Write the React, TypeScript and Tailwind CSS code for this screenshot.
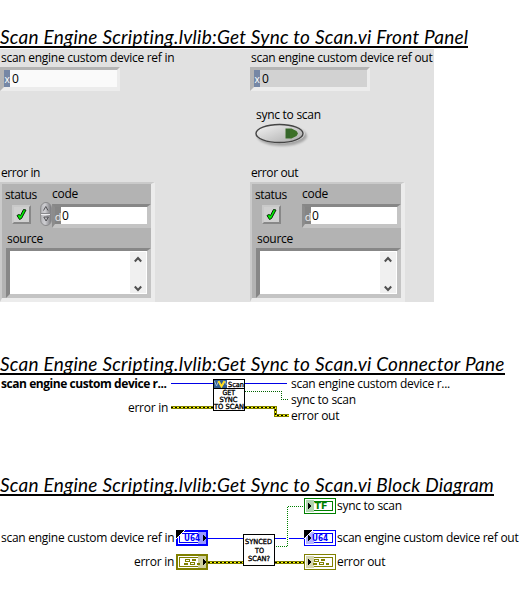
import type { ReactNode } from "react";

const labelFont = "font-['Open_Sans','Noto_Sans',sans-serif] text-[12px] leading-4 whitespace-pre text-black";

function Label({ children, className = "tracking-[-0.27px]" }: { children: ReactNode; className?: string }) {
  return <span className={`block ${labelFont} ${className}`}>{children}</span>;
}

function Heading({ children, className = "" }: { children: ReactNode; className?: string }) {
  return (
    <h2
      className={`h-[22px] w-fit overflow-hidden border-b-2 border-black font-['Lato',sans-serif] text-[19px] leading-[22px] font-normal tracking-[0.24px] whitespace-pre text-black italic [font-variant-ligatures:none] ${className}`}
    >
      {children}
    </h2>
  );
}

function RefField({ readOnly = false }: { readOnly?: boolean }) {
  return (
    <div className="h-6 w-[120px] border-t-[3px] border-r-[3px] border-b-4 border-l-4 border-t-[#b4b4b4] border-r-[#ececec] border-b-[#ececec] border-l-[#b4b4b4]">
      <div className={`flex h-full items-center ${readOnly ? "bg-[#d2d2d2]" : "bg-[#fafafa]"}`}>
        <span className="flex h-full w-[6px] items-center justify-center bg-[#7587a5] pt-[1px] font-['Open_Sans',sans-serif] text-[10px] leading-none text-white">x</span>
        <Label className="pl-[2px]">0</Label>
      </div>
    </div>
  );
}

function Spinner() {
  return (
    <svg className="block h-6 w-3" viewBox="0 0 12 24">
      <defs>
        <linearGradient id="spin">
          <stop offset="0" stopColor="#b4b4b8" />
          <stop offset=".4" stopColor="#cfcfd3" />
          <stop offset="1" stopColor="#77777b" />
        </linearGradient>
      </defs>
      <rect x=".7" y=".5" width="10.6" height="23" rx="5.3" fill="url(#spin)" stroke="#8a8a8c" />
      <path d="M1 11.500h10" stroke="#88888c" />
      <path d="M1 12.500h9" stroke="#ededf0" />
      <path d="M3.500 8.500 5.800 4.500 8 8.500M3.800 15h4.600L6.100 19z" fill="none" stroke="#505054" />
    </svg>
  );
}

function Check() {
  return (
    <div className="flex h-[19px] w-[19px] items-center justify-center border-2 border-t-[#c9c9c9] border-r-[#888] border-b-[#888] border-l-[#c9c9c9] bg-[#d0d0d0]">
      <svg className="h-[13px] w-[13px]" viewBox="0 0 13 13">
        <path d="M2 7.500 4 6.500 5.500 7.500 8.500 1.500 11 2 6.500 10.500 4.500 11.500Z" fill="#00f000" stroke="#002800" strokeWidth="1" />
      </svg>
    </div>
  );
}

function ErrorCluster({ editable = false }: { editable?: boolean }) {
  return (
    <div className="h-[120px] w-[155px] border-t-2 border-r-4 border-b-4 border-l-2 border-t-[#cacaca] border-r-[#ececec] border-b-[#ececec] border-l-[#cacaca] bg-[#b3b3b3]">
      <div className="flex h-16">
        <div className="w-[38px] pt-[3px]">
          <Label className="pl-[3px] tracking-[-0.35px]">status</Label>
          <div className="pt-[2px] pl-[10px]">
            <Check />
          </div>
        </div>
        <div className="w-3 pt-[18px]">{editable && <Spinner />}</div>
        <div className="w-[99px] pt-[2px]">
          <Label>code</Label>
          <div className="mt-[2px] h-6 border-t-[3px] border-r-4 border-b-4 border-l-[3px] border-t-[#878787] border-r-[#c4c4c4] border-b-[#c4c4c4] border-l-[#8c8c8c]">
            <div className="flex h-full items-center bg-white">
              <span className="flex h-full w-[6px] items-center justify-center bg-[#858585] pt-[1px] font-['Open_Sans',sans-serif] text-[11px] leading-none text-[#eee]">d</span>
              <Label className="pl-[1px]">0</Label>
            </div>
          </div>
        </div>
      </div>
      <div className="-mt-[17px] pl-[4px]">
        <Label className="pl-[1px] tracking-[-0.3px]">source</Label>
        <div className="mt-[1px] h-[50px] w-[145px] border-t-[3px] border-r-4 border-b-4 border-l-4 border-t-[#878787] border-r-[#c4c4c4] border-b-[#c4c4c4] border-l-[#878787]">
          <div className="flex h-full justify-end bg-white pt-[1px] pr-[1px] pb-[1px]">
            <div className="flex w-4 flex-col items-center justify-between bg-[#f0f0f0] pt-1 pb-px">
              <svg className="h-[7px] w-2" viewBox="0 0 8 7"><path d="m.8 5.500 3.200-3.500 3.200 3.500" fill="none" stroke="#505050" strokeWidth="2" /></svg>
              <svg className="h-[7px] w-2" viewBox="0 0 8 7"><path d="m.8 1.500 3.200 3.500 3.200-3.500" fill="none" stroke="#505050" strokeWidth="2" /></svg>
            </div>
          </div>
        </div>
      </div>
    </div>
  );
}

function SyncSwitch() {
  return (
    <svg className="block h-[28px] w-[56px]" viewBox="0 0 56 28">
      <defs>
        <linearGradient id="sw" x1="0" y1="0" x2="1" y2="1">
          <stop offset="0" stopColor="#f4f4f4" />
          <stop offset="1" stopColor="#a9a9a9" />
        </linearGradient>
        <filter id="soft"><feGaussianBlur stdDeviation="1" /></filter>
      </defs>
      <ellipse cx="29" cy="13" rx="25" ry="10" fill="#a5a5a5" filter="url(#soft)" />
      <ellipse cx="27" cy="10.500" rx="25" ry="10" fill="#d5d5d5" />
      <ellipse cx="26.500" cy="10.500" rx="23.500" ry="9" fill="url(#sw)" stroke="#454545" strokeWidth="1.400" />
      <path d="M32.500 5.500h6l5 2.500 1.500 2.500-1.500 2.500-5 2.500h-6z" fill="#3d7028" />
      <path d="M33 6h4v9h-4z" fill="#35662a" />
    </svg>
  );
}

function ErrorWire({ d }: { d: string }) {
  return (
    <g fill="none">
      <path d={d} stroke="#808000" strokeWidth="3" />
      <path d={d} stroke="#ffff00" strokeWidth="1" />
      <path d={d} stroke="#000" strokeWidth="1" strokeDasharray="2 2" />
    </g>
  );
}

type PixelTextProps = { x: number; y: number; w: number; size?: number; fill?: string; heavy?: boolean; children: string };

function PixelText({ x, y, w, size = 8, fill = "#000", heavy = false, children }: PixelTextProps) {
  return (
    <text
      x={x}
      y={y}
      textLength={w}
      lengthAdjust="spacingAndGlyphs"
      fontSize={size}
      fill={fill}
      stroke={heavy ? "none" : fill}
      strokeWidth={heavy ? 0 : 0.35}
      className={`font-['DejaVu_Sans',sans-serif] ${heavy ? "font-bold" : "font-normal"}`}
    >
      {children}
    </text>
  );
}

type TerminalProps = { x: number; y: number; color: string; tint: string; kind: string; control?: boolean; typedef?: boolean };

function Terminal({ x, y, color, tint, kind, control = false, typedef = false }: TerminalProps) {
  return (
    <g transform={`translate(${x} ${y})`}>
      <rect width="32" height="16" fill={color} />
      <rect x={control ? 2 : 1} y={control ? 2 : 1} width={control ? 28 : 30} height={control ? 12 : 14} fill="#fff" />
      <rect x="3.500" y="3.500" width="25" height="9" fill="none" stroke={color} />
      <rect x={control ? 22 : 2} y="2" width="8" height="12" fill={tint} />
      <path d={control ? "M27 5v6l3-3z" : "M4 5v6l3-3z"} fill="#000" />
      {kind === "cluster" ? (
        <g transform={`translate(${control ? 0 : 1} 0)`} fill="none" stroke={color}>
          <rect x="9.500" y="5.500" width="4" height="2" />
          <rect x="16.500" y="5.500" width="3" height="1" />
          <rect x="8.500" y="9.500" width="3" height="1" />
          <rect x="14.500" y="8.500" width="4" height="2" />
          <path d="M21 9.500h3M21 10.500h3" />
        </g>
      ) : (
        <PixelText heavy size={kind === "TF" ? 8.5 : 9} x={kind === "TF" ? 10.5 : 8} y={11.2} w={kind === "TF" ? 13 : 16} fill={color}>
          {kind}
        </PixelText>
      )}
      {typedef && (
        <>
          <path d="M0 0h9L0 9z" fill="#fff" />
          <path d="M0 0h8L0 8z" fill="#000" />
        </>
      )}
    </g>
  );
}

function Tag({ at, bold = false, children }: { at: string; bold?: boolean; children: string }) {
  return (
    <span className={`absolute ${labelFont} ${bold ? "font-bold tracking-[-0.44px]" : "tracking-[-0.27px]"} ${at}`}>{children}</span>
  );
}

function ConnectorPane() {
  return (
    <div className="relative h-[102px] w-[520px]">
      <svg className="absolute top-0 left-0 h-[60px] w-[520px]" viewBox="0 375 520 60" shapeRendering="crispEdges">
        <path d="M171 383.500h116" stroke="#0000e6" />
        <path d="M245 391.500h36.500v8H288" fill="none" stroke="#006400" strokeDasharray="1 1" />
        <ErrorWire d="M171 407.500h43" />
        <ErrorWire d="M245 407.500h30.500v8H289" />
        <rect x="213.500" y="379.500" width="31" height="31" fill="#fff" stroke="#000" />
        <rect x="214" y="380" width="13" height="8" fill="#315e91" />
        <path d="m214.500 381 2 5 2-5 1.500 4M223 385l2-4 1.500 4" fill="none" stroke="#9bb9d6" shapeRendering="auto" />
        <path d="m218.500 381 3 5.500 3-5.500" fill="none" stroke="#ffdd20" strokeWidth="2" shapeRendering="auto" />
        <path d="M214 388.500h30" stroke="#000" />
        <PixelText x={228} y={386.5} w={16} size={7}>Scan</PixelText>
        <PixelText x={222.5} y={395} w={12.5} size={7}>GET</PixelText>
        <PixelText x={219.5} y={402} w={18} size={7}>SYNC</PixelText>
        <PixelText x={214} y={408.5} w={30} size={7}>TO SCAN</PixelText>
      </svg>
      <Tag at="left-[1px] top-[1px]" bold>scan engine custom device r...</Tag>
      <Tag at="right-[352px] top-[25px]">error in</Tag>
      <Tag at="left-[291px] top-[1px]">scan engine custom device r...</Tag>
      <Tag at="left-[291px] top-[17px]">sync to scan</Tag>
      <Tag at="left-[291px] top-[33px]">error out</Tag>
    </div>
  );
}

function BlockDiagram() {
  return (
    <div className="relative h-[99px] w-[520px]">
      <svg className="absolute top-0 left-0 h-[99px] w-[520px]" viewBox="0 496 520 99" shapeRendering="crispEdges">
        <path d="M208 538.500h36M275 538.500h11M289 538.500h16" stroke="#0000ff" />
        <path d="M276 546.500h11.500v-40H304" fill="none" stroke="#008000" strokeDasharray="1 1" />
        <ErrorWire d="M208 562.500h36" />
        <ErrorWire d="M275 562.500h30" />
        <rect x="243.500" y="534.500" width="31" height="31" fill="#fff" stroke="#000" />
        <PixelText x={245} y={544} w={27} size={7}>SYNCED</PixelText>
        <PixelText x={255} y={553} w={9} size={7}>TO</PixelText>
        <PixelText x={248} y={561} w={22} size={7}>SCAN?</PixelText>
        <Terminal x={176} y={530} color="#0000ff" tint="#9999ff" kind="U64" control typedef />
        <Terminal x={176} y={554} color="#808000" tint="#cfcf9f" kind="cluster" control />
        <Terminal x={304} y={498} color="#008000" tint="#b0d4b0" kind="TF" />
        <Terminal x={304} y={530} color="#0000ff" tint="#b3b3ff" kind="U64" typedef />
        <Terminal x={304} y={554} color="#808000" tint="#d6d6b0" kind="cluster" />
      </svg>
      <Tag at="left-[1px] top-[34px]">scan engine custom device ref in</Tag>
      <Tag at="right-[346px] top-[58px]">error in</Tag>
      <Tag at="left-[337px] top-[2px]">sync to scan</Tag>
      <Tag at="left-[337px] top-[34px]">scan engine custom device ref out</Tag>
      <Tag at="left-[337px] top-[58px]">error out</Tag>
    </div>
  );
}

export default function App() {
  return (
    <main className="h-[595px] w-[520px] overflow-hidden bg-white pt-[26px]">
      <Heading>Scan Engine Scripting.lvlib:Get Sync to Scan.vi Front Panel</Heading>
      <section className="mt-[1px] flex h-[253px] w-[434px] bg-[#e1e1e1]">
        <div className="flex w-[250px] shrink-0 flex-col">
          <Label className="h-[18px] pt-[1px] pl-[1px] tracking-[-0.27px]">scan engine custom device ref in</Label>
          <RefField />
          <Label className="mt-[74px] mb-[1px] pl-[1px] tracking-[-0.4px]">error in</Label>
          <ErrorCluster editable />
        </div>
        <div className="flex flex-col">
          <Label className="h-[18px] pt-[1px] pl-[1px] tracking-[-0.27px]">scan engine custom device ref out</Label>
          <RefField readOnly />
          <Label className="mt-4 pl-[6px] tracking-[-0.27px]">sync to scan</Label>
          <div className="h-[42px] pl-[3px]">
            <SyncSwitch />
          </div>
          <Label className="mb-[1px] pl-[1px] tracking-[-0.4px]">error out</Label>
          <ErrorCluster />
        </div>
      </section>
      <Heading className="mt-[51px]">Scan Engine Scripting.lvlib:Get Sync to Scan.vi Connector Pane</Heading>
      <ConnectorPane />
      <Heading className="-mt-[3px]">Scan Engine Scripting.lvlib:Get Sync to Scan.vi Block Diagram</Heading>
      <BlockDiagram />
    </main>
  );
}
